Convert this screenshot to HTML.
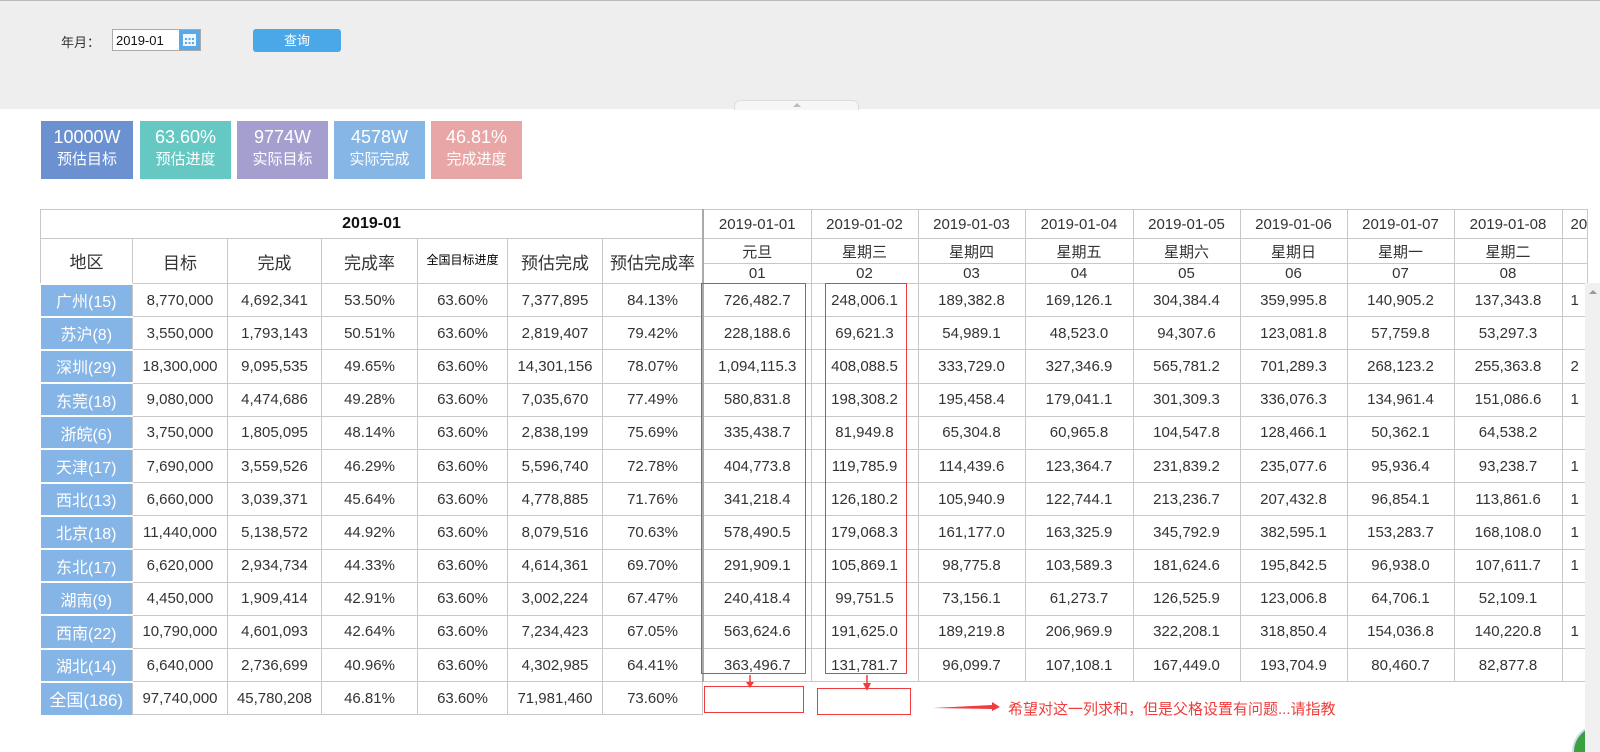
<!DOCTYPE html>
<html><head><meta charset="utf-8"><style>
*{margin:0;padding:0;box-sizing:border-box}
body{width:1600px;height:752px;overflow:hidden;background:#fff;font-family:"Liberation Sans","Noto Sans CJK SC",sans-serif;color:#333;position:relative}
.top{position:absolute;left:0;top:0;width:1600px;height:109px;background:#eeeeee;border-top:1px solid #bbb}
.lab{position:absolute;left:61px;top:32px;font-size:13px;color:#333}
.inp{position:absolute;left:112px;top:29px;width:89px;height:22px;border:1px solid #aaa;background:#fff;font-size:13px;padding:3px 0 0 3px;color:#111}
.cal{position:absolute;right:0;top:0;width:21px;height:20px;background:#5aa8e6}
.btn{position:absolute;left:253px;top:29px;width:88px;height:23px;background:#4aa8e8;border-radius:3px;color:#fff;font-size:13px;text-align:center;line-height:23px}
.tab{position:absolute;left:734px;top:100px;width:125px;height:10px;background:#f6f6f6;border:1px solid #ddd;border-bottom:none;border-radius:6px 6px 0 0}
.card{position:absolute;top:121px;height:58px;color:#fff;text-align:center}
.card b{display:block;font-weight:normal;font-size:18px;margin-top:5px;line-height:22px}
.card span{display:block;font-size:15px;line-height:24px}
table{border-collapse:collapse;table-layout:fixed;position:absolute}
td{border:1px solid #c8c8c8;text-align:center;font-size:15px;white-space:nowrap;overflow:hidden;padding:0}
#lt{left:40px;top:209px}
#rt{left:702px;top:209px;border-left:2px solid #aaa}
td.bl{background:#85b5e6;color:#fff;font-size:16px;border-left:none;border-top:2px solid #fff;border-bottom:2px solid #fff}
.r{position:absolute;border:1px solid #f03c3c}
.sb{position:absolute;left:1585px;top:283px;width:15px;height:469px;background:#f0f0f0}
</style></head><body>
<div class="top"></div>
<div class="lab">年月：</div>
<div class="inp">2019-01<div class="cal"><svg width="21" height="20" viewBox="0 0 21 20"><rect x="4" y="4" width="13" height="12" fill="#fff" opacity=".9"/><g fill="#5aa8e6"><rect x="6" y="8" width="2" height="2"/><rect x="9.5" y="8" width="2" height="2"/><rect x="13" y="8" width="2" height="2"/><rect x="6" y="12" width="2" height="2"/><rect x="9.5" y="12" width="2" height="2"/><rect x="13" y="12" width="2" height="2"/></g></svg></div></div>
<div class="btn">查询</div>
<div class="tab"><div style="width:0;height:0;border:4px solid transparent;border-bottom-color:#bbb;margin:-2px auto 0"></div></div>

<div class="card" style="left:41px;width:92px;background:#6b91d1"><b>10000W</b><span>预估目标</span></div>
<div class="card" style="left:140px;width:91px;background:#66c8c3"><b>63.60%</b><span>预估进度</span></div>
<div class="card" style="left:237px;width:91px;background:#a59fcf"><b>9774W</b><span>实际目标</span></div>
<div class="card" style="left:334px;width:91px;background:#85b6e6"><b>4578W</b><span>实际完成</span></div>
<div class="card" style="left:431px;width:91px;background:#e8a7a6"><b>46.81%</b><span>完成进度</span></div>

<table id="lt">
<colgroup><col style="width:92px"><col style="width:95px"><col style="width:94px"><col style="width:96px"><col style="width:90px"><col style="width:95px"><col style="width:100px"></colgroup>
<tr style="height:29px"><td colspan="7" style="font-weight:bold;font-size:16px;color:#111">2019-01</td></tr>
<tr style="height:45px"><td style="font-size:17px">地区</td><td style="font-size:17px">目标</td><td style="font-size:17px">完成</td><td style="font-size:17px">完成率</td><td style="font-size:12px;color:#000;vertical-align:top;padding-top:12px">全国目标进度</td><td style="font-size:17px">预估完成</td><td style="font-size:17px">预估完成率</td></tr>
<tr style="height:33.2px"><td class="bl">广州(15)</td><td>8,770,000</td><td>4,692,341</td><td>53.50%</td><td>63.60%</td><td>7,377,895</td><td>84.13%</td></tr>
<tr style="height:33.2px"><td class="bl">苏沪(8)</td><td>3,550,000</td><td>1,793,143</td><td>50.51%</td><td>63.60%</td><td>2,819,407</td><td>79.42%</td></tr>
<tr style="height:33.2px"><td class="bl">深圳(29)</td><td>18,300,000</td><td>9,095,535</td><td>49.65%</td><td>63.60%</td><td>14,301,156</td><td>78.07%</td></tr>
<tr style="height:33.2px"><td class="bl">东莞(18)</td><td>9,080,000</td><td>4,474,686</td><td>49.28%</td><td>63.60%</td><td>7,035,670</td><td>77.49%</td></tr>
<tr style="height:33.2px"><td class="bl">浙皖(6)</td><td>3,750,000</td><td>1,805,095</td><td>48.14%</td><td>63.60%</td><td>2,838,199</td><td>75.69%</td></tr>
<tr style="height:33.2px"><td class="bl">天津(17)</td><td>7,690,000</td><td>3,559,526</td><td>46.29%</td><td>63.60%</td><td>5,596,740</td><td>72.78%</td></tr>
<tr style="height:33.2px"><td class="bl">西北(13)</td><td>6,660,000</td><td>3,039,371</td><td>45.64%</td><td>63.60%</td><td>4,778,885</td><td>71.76%</td></tr>
<tr style="height:33.2px"><td class="bl">北京(18)</td><td>11,440,000</td><td>5,138,572</td><td>44.92%</td><td>63.60%</td><td>8,079,516</td><td>70.63%</td></tr>
<tr style="height:33.2px"><td class="bl">东北(17)</td><td>6,620,000</td><td>2,934,734</td><td>44.33%</td><td>63.60%</td><td>4,614,361</td><td>69.70%</td></tr>
<tr style="height:33.2px"><td class="bl">湖南(9)</td><td>4,450,000</td><td>1,909,414</td><td>42.91%</td><td>63.60%</td><td>3,002,224</td><td>67.47%</td></tr>
<tr style="height:33.2px"><td class="bl">西南(22)</td><td>10,790,000</td><td>4,601,093</td><td>42.64%</td><td>63.60%</td><td>7,234,423</td><td>67.05%</td></tr>
<tr style="height:33.2px"><td class="bl">湖北(14)</td><td>6,640,000</td><td>2,736,699</td><td>40.96%</td><td>63.60%</td><td>4,302,985</td><td>64.41%</td></tr>
<tr style="height:33px"><td class="bl" style="font-size:17px;border-bottom:none">全国(186)</td><td>97,740,000</td><td>45,780,208</td><td>46.81%</td><td>63.60%</td><td>71,981,460</td><td>73.60%</td></tr>
</table>

<table id="rt" style="font-size:15px">
<colgroup><col style="width:108px"><col style="width:107px"><col style="width:107px"><col style="width:108px"><col style="width:107px"><col style="width:107px"><col style="width:107px"><col style="width:108px"><col style="width:24px"></colgroup>
<tr style="height:29px"><td>2019-01-01</td><td>2019-01-02</td><td>2019-01-03</td><td>2019-01-04</td><td>2019-01-05</td><td>2019-01-06</td><td>2019-01-07</td><td>2019-01-08</td><td style="text-align:left;padding-left:8px">20</td></tr>
<tr style="height:25px"><td>元旦</td><td>星期三</td><td>星期四</td><td>星期五</td><td>星期六</td><td>星期日</td><td>星期一</td><td>星期二</td><td></td></tr>
<tr style="height:20px"><td>01</td><td>02</td><td>03</td><td>04</td><td>05</td><td>06</td><td>07</td><td>08</td><td></td></tr>
<tr style="height:33.2px"><td>726,482.7</td><td>248,006.1</td><td>189,382.8</td><td>169,126.1</td><td>304,384.4</td><td>359,995.8</td><td>140,905.2</td><td>137,343.8</td><td style="text-align:left;padding-left:8px">1</td></tr>
<tr style="height:33.2px"><td>228,188.6</td><td>69,621.3</td><td>54,989.1</td><td>48,523.0</td><td>94,307.6</td><td>123,081.8</td><td>57,759.8</td><td>53,297.3</td><td></td></tr>
<tr style="height:33.2px"><td>1,094,115.3</td><td>408,088.5</td><td>333,729.0</td><td>327,346.9</td><td>565,781.2</td><td>701,289.3</td><td>268,123.2</td><td>255,363.8</td><td style="text-align:left;padding-left:8px">2</td></tr>
<tr style="height:33.2px"><td>580,831.8</td><td>198,308.2</td><td>195,458.4</td><td>179,041.1</td><td>301,309.3</td><td>336,076.3</td><td>134,961.4</td><td>151,086.6</td><td style="text-align:left;padding-left:8px">1</td></tr>
<tr style="height:33.2px"><td>335,438.7</td><td>81,949.8</td><td>65,304.8</td><td>60,965.8</td><td>104,547.8</td><td>128,466.1</td><td>50,362.1</td><td>64,538.2</td><td></td></tr>
<tr style="height:33.2px"><td>404,773.8</td><td>119,785.9</td><td>114,439.6</td><td>123,364.7</td><td>231,839.2</td><td>235,077.6</td><td>95,936.4</td><td>93,238.7</td><td style="text-align:left;padding-left:8px">1</td></tr>
<tr style="height:33.2px"><td>341,218.4</td><td>126,180.2</td><td>105,940.9</td><td>122,744.1</td><td>213,236.7</td><td>207,432.8</td><td>96,854.1</td><td>113,861.6</td><td style="text-align:left;padding-left:8px">1</td></tr>
<tr style="height:33.2px"><td>578,490.5</td><td>179,068.3</td><td>161,177.0</td><td>163,325.9</td><td>345,792.9</td><td>382,595.1</td><td>153,283.7</td><td>168,108.0</td><td style="text-align:left;padding-left:8px">1</td></tr>
<tr style="height:33.2px"><td>291,909.1</td><td>105,869.1</td><td>98,775.8</td><td>103,589.3</td><td>181,624.6</td><td>195,842.5</td><td>96,938.0</td><td>107,611.7</td><td style="text-align:left;padding-left:8px">1</td></tr>
<tr style="height:33.2px"><td>240,418.4</td><td>99,751.5</td><td>73,156.1</td><td>61,273.7</td><td>126,525.9</td><td>123,006.8</td><td>64,706.1</td><td>52,109.1</td><td></td></tr>
<tr style="height:33.2px"><td>563,624.6</td><td>191,625.0</td><td>189,219.8</td><td>206,969.9</td><td>322,208.1</td><td>318,850.4</td><td>154,036.8</td><td>140,220.8</td><td style="text-align:left;padding-left:8px">1</td></tr>
<tr style="height:33.2px"><td>363,496.7</td><td>131,781.7</td><td>96,099.7</td><td>107,108.1</td><td>167,449.0</td><td>193,704.9</td><td>80,460.7</td><td>82,877.8</td><td></td></tr>
</table>

<div class="r" style="left:701px;top:283px;width:105px;height:391px"></div>
<div class="r" style="left:825px;top:283px;width:82px;height:391px"></div>
<div class="r" style="left:704px;top:686px;width:100px;height:27px"></div>
<div class="r" style="left:817px;top:688px;width:94px;height:27px"></div>
<svg style="position:absolute;left:0;top:0" width="1600" height="752">
<g stroke="#f03c3c" stroke-width="1.5" fill="#f03c3c">
<line x1="750" y1="675" x2="750" y2="683"/><polygon points="746,682 754,682 750,688" stroke="none"/>
<line x1="867" y1="675" x2="867" y2="684"/><polygon points="863,683 871,683 867,691" stroke="none"/>
<polygon points="933,708 992,705 992,702 1000,707 992,711 992,709" stroke="none"/>
</g>
<circle cx="1600" cy="752" r="27" fill="#3aa040" stroke="#cde" stroke-width="2"/>
<text x="1586" y="750" fill="#fff" font-size="11" font-family="Liberation Sans">63</text>
</svg>
<div style="position:absolute;left:1008px;top:698px;color:#f03c3c;font-size:15px">希望对这一列求和，但是父格设置有问题...请指教</div>
<div class="sb"><div style="width:0;height:0;border:4px solid transparent;border-bottom-color:#999;margin:3px auto 0"></div></div>
</body></html>
